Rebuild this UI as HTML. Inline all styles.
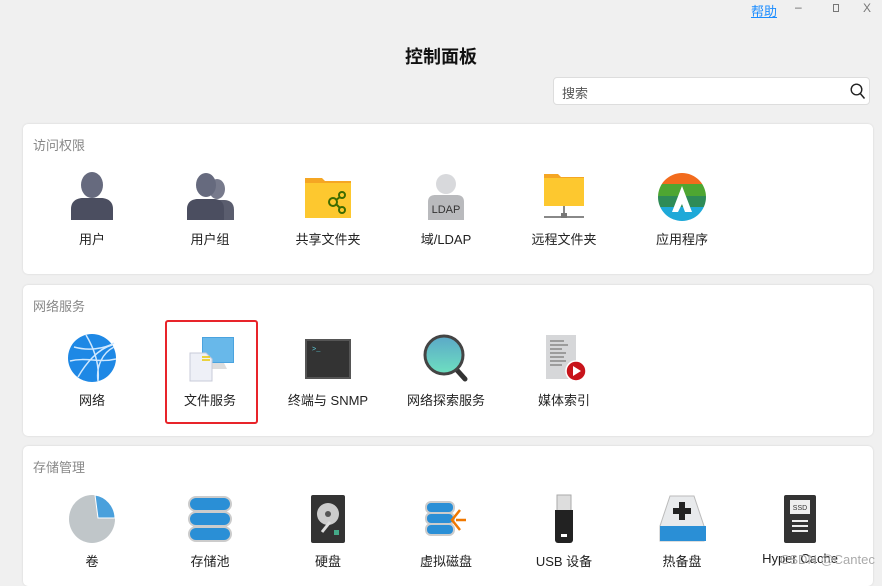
<!DOCTYPE html>
<html><head><meta charset="utf-8"><style>
*{margin:0;padding:0;box-sizing:border-box}
body{width:882px;height:575px;overflow:hidden;background:#f0f0f0;font-family:"Liberation Sans","Noto Sans CJK SC",sans-serif;position:relative;color:#222}
.abs{position:absolute}
.card{position:absolute;left:23px;width:850px;background:#fff;border-radius:5px;box-shadow:0 0 2px rgba(0,0,0,.12)}
.sec{position:absolute;left:10px;top:11px;font-size:13px;color:#888}
.item{position:absolute;width:118px;text-align:center;font-size:13px;color:#222}
.item svg{display:block;margin:0 auto}
.lbl{position:absolute;left:0;width:118px;text-align:center;font-size:13px}
</style></head><body>
<div class="abs" style="left:751px;top:1px;font-size:13px;color:#1a8cff;text-decoration:underline">帮助</div>
<div class="abs" style="left:795px;top:0;font-size:12px;color:#666">–</div>
<div class="abs" style="left:833px;top:4px;width:6px;height:8px;border:1px solid #777"></div>
<div class="abs" style="left:863px;top:1px;font-size:12px;color:#777">X</div>
<div class="abs" style="left:0;width:882px;top:43px;text-align:center;font-size:18px;font-weight:bold;color:#111">控制面板</div>
<div class="abs" style="left:553px;top:77px;width:317px;height:28px;background:#fff;border:1px solid #ddd;border-radius:4px">
<span class="abs" style="left:8px;top:5px;font-size:13px;color:#555">搜索</span>
<svg class="abs" style="left:296px;top:5px" width="16" height="17" viewBox="0 0 16 17"><circle cx="6.5" cy="6.5" r="5.3" fill="none" stroke="#222" stroke-width="1.4"/><line x1="10.3" y1="10.5" x2="14.5" y2="15.5" stroke="#222" stroke-width="1.5"/></svg>
</div>

<div class="card" style="top:124px;height:150px"><div class="sec">访问权限</div>
<div class="item" style="left:10px;top:48px"><svg width="48" height="50" viewBox="0 0 48 50"><ellipse cx="24" cy="13" rx="11" ry="13" fill="#666a7e"/><path d="M3 48V37c0-8 6-11 12-11h18c6 0 12 3 12 11v11z" fill="#4b4e60"/></svg><div class="lbl" style="top:57px">用户</div></div>
<div class="item" style="left:128px;top:48px"><svg width="48" height="50" viewBox="0 0 48 50"><ellipse cx="31" cy="17" rx="8" ry="10" fill="#777a8c"/><path d="M24 48V38c0-6 4-10 10-10h4c6 0 10 3 10 10v10z" fill="#5a5d6e"/><ellipse cx="20" cy="13" rx="10" ry="12" fill="#666a7e"/><path d="M1 48V37c0-7 5-10 11-10h16c6 0 10 3 10 10v11z" fill="#4b4e60"/></svg><div class="lbl" style="top:57px">用户组</div></div>
<div class="item" style="left:246px;top:48px"><svg width="48" height="50" viewBox="0 0 48 50"><path d="M1 6h17l3 3h26v37H1z" fill="#f5a623"/><rect x="1" y="11" width="46" height="35" fill="#fdc82f"/><g fill="none" stroke="#3d6b00" stroke-width="2"><circle cx="29" cy="30" r="4"/><circle cx="38" cy="23" r="3"/><circle cx="38" cy="38" r="3"/><path d="M32 28l4-3M32 32l4 4"/></g></svg><div class="lbl" style="top:57px">共享文件夹</div></div>
<div class="item" style="left:364px;top:48px"><svg width="48" height="50" viewBox="0 0 48 50"><circle cx="24" cy="12" r="10" fill="#d8d9dc"/><path d="M6 48V30c0-6 4-7 8-7h20c4 0 8 1 8 7v18z" fill="#b9babd"/><text x="24" y="41" font-size="11" font-family="Liberation Sans" text-anchor="middle" fill="#333">LDAP</text></svg><div class="lbl" style="top:57px">域/LDAP</div></div>
<div class="item" style="left:482px;top:48px"><svg width="48" height="50" viewBox="0 0 48 50"><path d="M4 2h14l3 3h23v29H4z" fill="#f5a623"/><rect x="4" y="6" width="40" height="28" fill="#fdc82f"/><path d="M24 34v10M4 45h40" stroke="#888" stroke-width="2"/><rect x="21" y="41" width="6" height="5" fill="#777"/></svg><div class="lbl" style="top:57px">远程文件夹</div></div>
<div class="item" style="left:600px;top:48px"><svg width="48" height="50" viewBox="0 0 48 50"><clipPath id="c"><ellipse cx="24" cy="25" rx="24" ry="24"/></clipPath><g clip-path="url(#c)"><rect width="48" height="12" fill="#f26b1d"/><rect y="12" width="48" height="12" fill="#4ea632"/><rect y="24" width="48" height="11" fill="#2e8b57"/><rect y="35" width="48" height="15" fill="#1ea9d8"/></g><path d="M14 40L24 14L34 40H27L24 32L20 40z" fill="#fff"/></svg><div class="lbl" style="top:57px">应用程序</div></div>
</div>

<div class="card" style="top:285px;height:151px"><div class="sec">网络服务</div>
<div class="item" style="left:10px;top:48px"><svg width="48" height="50" viewBox="0 0 48 50"><circle cx="24" cy="25" r="24" fill="#1e88e5"/><g fill="none" stroke="#cfe8ff" stroke-width="1.5"><path d="M6 14c14 4 30 2 40-4M2 28c16-4 30 2 46-2M10 44c8-14 20-28 34-32M18 2c6 10 14 26 12 46M30 48c-2-14 4-28 16-34"/></g></svg><div class="lbl" style="top:57px">网络</div></div>
<div class="item" style="left:128px;top:48px"><svg width="48" height="50" viewBox="0 0 48 50"><rect x="16" y="4" width="32" height="26" fill="#4aa3df"/><rect x="17" y="5" width="30" height="24" fill="#68b8ea"/><path d="M26 30h12l3 6H22z" fill="#ddd"/><path d="M4 20h16l6 6v22H4z" fill="#eef0f7" stroke="#c8cbd8"/><path d="M16 24h8M16 27h8" stroke="#e8c800" stroke-width="1.5"/></svg><div class="lbl" style="top:57px">文件服务</div></div>
<div class="item" style="left:246px;top:48px"><svg width="48" height="50" viewBox="0 0 48 50"><rect x="1" y="6" width="46" height="40" fill="#555"/><rect x="3" y="8" width="42" height="36" fill="#333"/><text x="8" y="18" font-size="7" fill="#5fd3e0" font-family="Liberation Mono">&gt;_</text></svg><div class="lbl" style="top:57px">终端与 SNMP</div></div>
<div class="item" style="left:364px;top:48px"><svg width="48" height="50" viewBox="0 0 48 50"><defs><linearGradient id="g" x1="0" y1="0" x2="0" y2="1"><stop offset="0" stop-color="#5ba8c8"/><stop offset="1" stop-color="#6ee0c0"/></linearGradient></defs><path d="M34 36l9 10" stroke="#333" stroke-width="5" stroke-linecap="round"/><circle cx="22" cy="22" r="19" fill="url(#g)" stroke="#444" stroke-width="3"/></svg><div class="lbl" style="top:57px">网络探索服务</div></div>
<div class="item" style="left:482px;top:48px"><svg width="48" height="50" viewBox="0 0 48 50"><rect x="6" y="2" width="30" height="44" fill="#d6d7d9"/><g stroke="#888" stroke-width="1.5"><path d="M10 8h14M10 12h18M10 16h12M10 20h16M10 24h14M10 28h16M10 32h12"/></g><circle cx="36" cy="38" r="10" fill="#c8141b" stroke="#fff" stroke-width="1.5"/><path d="M33 33v10l8-5z" fill="#fff"/></svg><div class="lbl" style="top:57px">媒体索引</div></div>
</div>
<div class="abs" style="left:165px;top:320px;width:93px;height:104px;border:2px solid #e8242a;border-radius:3px"></div>

<div class="card" style="top:446px;height:140px"><div class="sec">存储管理</div>
<div class="item" style="left:10px;top:48px"><svg width="48" height="50" viewBox="0 0 48 50"><ellipse cx="24" cy="25" rx="23" ry="24" fill="#c0c6c9"/><path d="M27 1A23 24 0 0 1 47 24H30z" fill="#4aa0dc" stroke="#fff"/></svg><div class="lbl" style="top:57px">卷</div></div>
<div class="item" style="left:128px;top:48px"><svg width="48" height="50" viewBox="0 0 48 50"><g fill="#2a8fd6" stroke="#ccc" stroke-width="2"><rect x="3" y="33" width="42" height="14" rx="7"/><rect x="3" y="18" width="42" height="14" rx="7"/><rect x="3" y="3" width="42" height="14" rx="7"/></g></svg><div class="lbl" style="top:57px">存储池</div></div>
<div class="item" style="left:246px;top:48px"><svg width="48" height="50" viewBox="0 0 48 50"><rect x="7" y="1" width="34" height="48" rx="2" fill="#333"/><circle cx="24" cy="20" r="11" fill="#ccc"/><circle cx="24" cy="20" r="3" fill="#555"/><path d="M18 38l8-10" stroke="#ddd" stroke-width="3"/><rect x="30" y="36" width="5" height="5" fill="#4a8"/></svg><div class="lbl" style="top:57px">硬盘</div></div>
<div class="item" style="left:364px;top:48px"><svg width="48" height="50" viewBox="0 0 48 50"><g fill="#2a8fd6" stroke="#ccc" stroke-width="2"><rect x="4" y="30" width="28" height="11" rx="5"/><rect x="4" y="19" width="28" height="11" rx="5"/><rect x="4" y="8" width="28" height="11" rx="5"/></g><path d="M38 16l-8 10 8 10M34 26h10" stroke="#f07800" stroke-width="2.5" fill="none"/></svg><div class="lbl" style="top:57px">虚拟磁盘</div></div>
<div class="item" style="left:482px;top:48px"><svg width="48" height="50" viewBox="0 0 48 50"><rect x="17" y="1" width="14" height="16" fill="#ddd" stroke="#aaa"/><path d="M15 16h18v30a3 3 0 0 1-3 3H18a3 3 0 0 1-3-3z" fill="#222"/><rect x="21" y="40" width="6" height="3" fill="#fff"/></svg><div class="lbl" style="top:57px">USB 设备</div></div>
<div class="item" style="left:600px;top:48px"><svg width="48" height="50" viewBox="0 0 48 50"><path d="M12 2h24l10 30v15H2V32z" fill="#e8eaec" stroke="#bbb"/><path d="M2 32h46v15H2z" fill="#2a8fd6"/><path d="M21 8h6v6h6v6h-6v6h-6v-6h-6v-6h6z" fill="#222"/></svg><div class="lbl" style="top:57px">热备盘</div></div>
<div class="item" style="left:718px;top:48px"><svg width="48" height="50" viewBox="0 0 48 50"><rect x="8" y="1" width="32" height="48" rx="2" fill="#333"/><rect x="14" y="6" width="20" height="14" fill="#eee"/><text x="24" y="16" font-size="7" text-anchor="middle" fill="#333" font-family="Liberation Sans">SSD</text><path d="M16 27h16M16 32h16M16 37h16" stroke="#eee" stroke-width="2"/></svg><div class="lbl" style="top:57px">Hyper Cache</div></div>
</div>
<div class="abs" style="left:780px;top:552px;font-size:13px;color:#aaa">CSDN @Cantec</div>
</body></html>
